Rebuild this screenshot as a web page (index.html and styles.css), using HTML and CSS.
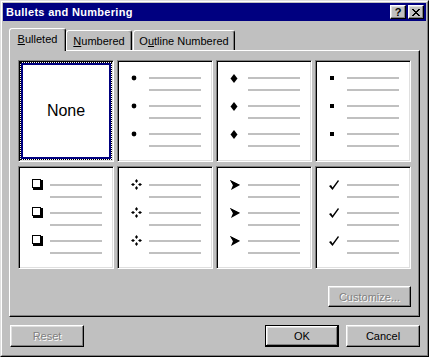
FILE: index.html
```html
<!DOCTYPE html>
<html>
<head>
<meta charset="utf-8">
<link rel="stylesheet" href="styles.css">
</head>
<body>
<div class="window">
  <div class="frame">
    <div class="titlebar">
      <span class="title">Bullets and Numbering</span>
      <div class="tbtns">
        <span class="tbtn help">?</span>
        <span class="tbtn close"><svg width="8" height="7" viewBox="0 0 8 7"><path d="M0 0h2v1h-2zM6 0h2v1h-2zM1 1h2v1h-2zM5 1h2v1h-2zM2 2h4v1h-4zM3 3h2v1h-2zM2 4h4v1h-4zM1 5h2v1h-2zM5 5h2v1h-2zM0 6h2v1h-2zM6 6h2v1h-2z" fill="#000"/></svg></span>
      </div>
    </div>
    <div class="tabs">
      <div class="tab active"><span><u>B</u>ulleted</span></div>
      <div class="tab numbered"><span><u>N</u>umbered</span></div>
      <div class="tab outline"><span>O<u>u</u>tline Numbered</span></div>
    </div>
    <div class="panel">
      <div class="grid">
        <div class="cell selected"><div class="focus"><span class="none">None</span></div></div>

        <div class="cell"><div class="sample">
          <div class="item"><span class="bul"><svg width="6" height="6" viewBox="0 0 6 6"><circle cx="3" cy="3" r="2.4" fill="#000"/></svg></span><span class="lines"><i></i><i></i></span></div>
          <div class="item"><span class="bul"><svg width="6" height="6" viewBox="0 0 6 6"><circle cx="3" cy="3" r="2.4" fill="#000"/></svg></span><span class="lines"><i></i><i></i></span></div>
          <div class="item"><span class="bul"><svg width="6" height="6" viewBox="0 0 6 6"><circle cx="3" cy="3" r="2.4" fill="#000"/></svg></span><span class="lines"><i></i><i></i></span></div>
        </div></div>

        <div class="cell"><div class="sample">
          <div class="item"><span class="bul"><svg width="8" height="9" viewBox="0 0 8 9"><path d="M4 0L7.5 4.5L4 9L0.5 4.5Z" fill="#000"/></svg></span><span class="lines"><i></i><i></i></span></div>
          <div class="item"><span class="bul"><svg width="8" height="9" viewBox="0 0 8 9"><path d="M4 0L7.5 4.5L4 9L0.5 4.5Z" fill="#000"/></svg></span><span class="lines"><i></i><i></i></span></div>
          <div class="item"><span class="bul"><svg width="8" height="9" viewBox="0 0 8 9"><path d="M4 0L7.5 4.5L4 9L0.5 4.5Z" fill="#000"/></svg></span><span class="lines"><i></i><i></i></span></div>
        </div></div>

        <div class="cell"><div class="sample">
          <div class="item"><span class="bul sq"><svg width="4" height="4" viewBox="0 0 4 4"><rect width="4" height="4" fill="#000"/></svg></span><span class="lines"><i></i><i></i></span></div>
          <div class="item"><span class="bul sq"><svg width="4" height="4" viewBox="0 0 4 4"><rect width="4" height="4" fill="#000"/></svg></span><span class="lines"><i></i><i></i></span></div>
          <div class="item"><span class="bul sq"><svg width="4" height="4" viewBox="0 0 4 4"><rect width="4" height="4" fill="#000"/></svg></span><span class="lines"><i></i><i></i></span></div>
        </div></div>

        <div class="cell"><div class="sample">
          <div class="item"><span class="bul"><svg width="11" height="11" viewBox="0 0 11 11"><path d="M0 0h9v9h-9zM1 1v7h7v-7z" fill="#000" fill-rule="evenodd"/><path d="M9 1h2v10h-10v-2h8z" fill="#000"/></svg></span><span class="lines"><i></i><i></i></span></div>
          <div class="item"><span class="bul"><svg width="11" height="11" viewBox="0 0 11 11"><path d="M0 0h9v9h-9zM1 1v7h7v-7z" fill="#000" fill-rule="evenodd"/><path d="M9 1h2v10h-10v-2h8z" fill="#000"/></svg></span><span class="lines"><i></i><i></i></span></div>
          <div class="item"><span class="bul"><svg width="11" height="11" viewBox="0 0 11 11"><path d="M0 0h9v9h-9zM1 1v7h7v-7z" fill="#000" fill-rule="evenodd"/><path d="M9 1h2v10h-10v-2h8z" fill="#000"/></svg></span><span class="lines"><i></i><i></i></span></div>
        </div></div>

        <div class="cell"><div class="sample">
          <div class="item"><span class="bul"><svg width="11" height="11" viewBox="0 0 11 11"><path d="M5.5 0L7 2L5.5 4L4 2ZM5.5 7L7 9L5.5 11L4 9ZM0 5.5L2 4L4 5.5L2 7ZM7 5.5L9 4L11 5.5L9 7Z" fill="#000"/></svg></span><span class="lines"><i></i><i></i></span></div>
          <div class="item"><span class="bul"><svg width="11" height="11" viewBox="0 0 11 11"><path d="M5.5 0L7 2L5.5 4L4 2ZM5.5 7L7 9L5.5 11L4 9ZM0 5.5L2 4L4 5.5L2 7ZM7 5.5L9 4L11 5.5L9 7Z" fill="#000"/></svg></span><span class="lines"><i></i><i></i></span></div>
          <div class="item"><span class="bul"><svg width="11" height="11" viewBox="0 0 11 11"><path d="M5.5 0L7 2L5.5 4L4 2ZM5.5 7L7 9L5.5 11L4 9ZM0 5.5L2 4L4 5.5L2 7ZM7 5.5L9 4L11 5.5L9 7Z" fill="#000"/></svg></span><span class="lines"><i></i><i></i></span></div>
        </div></div>

        <div class="cell"><div class="sample">
          <div class="item"><span class="bul"><svg width="10" height="10" viewBox="0 0 10 10"><path d="M0 0L10 5L1 10L3 5Z" fill="#000"/><path d="M0 0L10 5L3 5Z" fill="#000"/></svg></span><span class="lines"><i></i><i></i></span></div>
          <div class="item"><span class="bul"><svg width="10" height="10" viewBox="0 0 10 10"><path d="M0 0L10 5L1 10L3 5Z" fill="#000"/><path d="M0 0L10 5L3 5Z" fill="#000"/></svg></span><span class="lines"><i></i><i></i></span></div>
          <div class="item"><span class="bul"><svg width="10" height="10" viewBox="0 0 10 10"><path d="M0 0L10 5L1 10L3 5Z" fill="#000"/><path d="M0 0L10 5L3 5Z" fill="#000"/></svg></span><span class="lines"><i></i><i></i></span></div>
        </div></div>

        <div class="cell"><div class="sample">
          <div class="item"><span class="bul"><svg width="10" height="10" viewBox="0 0 10 10"><path d="M0 6L2 5L3.5 7.5L9 0L10 1L3.5 10Z" fill="#000"/></svg></span><span class="lines"><i></i><i></i></span></div>
          <div class="item"><span class="bul"><svg width="10" height="10" viewBox="0 0 10 10"><path d="M0 6L2 5L3.5 7.5L9 0L10 1L3.5 10Z" fill="#000"/></svg></span><span class="lines"><i></i><i></i></span></div>
          <div class="item"><span class="bul"><svg width="10" height="10" viewBox="0 0 10 10"><path d="M0 6L2 5L3.5 7.5L9 0L10 1L3.5 10Z" fill="#000"/></svg></span><span class="lines"><i></i><i></i></span></div>
        </div></div>
      </div>
      <div class="panel-foot">
        <button class="btn customize" disabled>Customize...</button>
      </div>
    </div>
    <div class="actions">
      <button class="btn" disabled>Reset</button>
      <span class="spacer"></span>
      <button class="btn default">OK</button>
      <button class="btn">Cancel</button>
    </div>
  </div>
</div>
</body>
</html>
```

FILE: styles.css
```css
* { box-sizing: border-box; }
html, body { margin: 0; padding: 0; background: #c0c0c0; }
body {
  font-family: "Liberation Sans", Arial, sans-serif;
  font-size: 11px;
  color: #000;
}
.window {
  width: 429px;
  height: 357px;
  border: 1px solid;
  border-color: #dfdfdf #000 #000 #dfdfdf;
  background: #c0c0c0;
}
.frame {
  height: 100%;
  border: 1px solid;
  border-color: #fff #808080 #808080 #fff;
  padding: 1px;
  display: flex;
  flex-direction: column;
}
.titlebar {
  height: 18px;
  background: #000080;
  color: #fff;
  display: flex;
  align-items: center;
  padding: 0 2px 0 3px;
}
.title {
  font-weight: bold;
  font-size: 11px;
  letter-spacing: 0.3px;
  flex: 1;
}
.tbtns { display: flex; gap: 2px; }
.tbtn {
  width: 16px;
  height: 14px;
  background: #c0c0c0;
  border: 1px solid;
  border-color: #fff #000 #000 #fff;
  box-shadow: inset -1px -1px #808080, inset 1px 1px #dfdfdf;
  color: #000;
  display: flex;
  align-items: center;
  justify-content: center;
  font-weight: bold;
  font-size: 11px;
  line-height: 1;
}
.tabs {
  display: flex;
  align-items: flex-end;
  height: 22px;
  margin-top: 7px;
  padding-left: 6px;
}
.tab {
  height: 20px;
  border: 1px solid;
  border-bottom: none;
  border-color: #fff #000 transparent #fff;
  box-shadow: inset -1px 0 #808080;
  border-radius: 3px 3px 0 0;
  background: #c0c0c0;
  display: flex;
  align-items: center;
  justify-content: center;
  white-space: nowrap;
}
.tab.active {
  width: 57px;
  height: 23px;
  margin-bottom: -1px;
  position: relative;
  z-index: 1;
  padding-bottom: 2px;
}
.tab.numbered { width: 66px; padding-top: 1px; }
.tab.outline { width: 102px; margin-left: 1px; padding-top: 1px; }
.panel {
  margin: 0 6px;
  height: 267px;
  border: 1px solid;
  border-color: #fff #000 #000 #fff;
  box-shadow: inset -1px -1px #808080;
  padding: 9px 8px 0 8px;
  display: flex;
  flex-direction: column;
}
.grid {
  display: grid;
  grid-template-columns: repeat(4, 96px);
  grid-template-rows: 102px 103px;
  column-gap: 3px;
  row-gap: 4px;
}
.cell {
  background: #fff;
  border: 1px solid;
  border-color: #808080 #fff #fff #808080;
  box-shadow: inset 1px 1px #000, inset -1px -1px #dfdfdf;
  padding: 1px;
  display: flex;
  align-items: center;
}
.focus {
  width: 100%;
  height: 100%;
  border: 1px dotted #000;
  box-shadow: inset 0 0 0 2px #000080;
  display: flex;
  align-items: center;
  justify-content: center;
}
.none {
  font-size: 16px;
  color: #000;
  margin-top: -1px;
}
.sample {
  display: flex;
  flex-direction: column;
  gap: 14px;
  padding-left: 11px;
  margin-top: 2px;
}
.item {
  display: flex;
  align-items: flex-start;
}
.bul {
  width: 19px;
  height: 14px;
  margin-top: -6px;
  display: flex;
  align-items: center;
  justify-content: flex-start;
  padding-left: 1px;
}
.bul.sq { padding-left: 2px; }
.lines {
  display: flex;
  flex-direction: column;
  gap: 10px;
}
.lines i {
  display: block;
  width: 52px;
  height: 2px;
  background: #c0c0c0;
}
.panel-foot {
  display: flex;
  justify-content: flex-end;
  margin-top: 17px;
}
.btn {
  font-family: "Liberation Sans", Arial, sans-serif;
  font-size: 11px;
  width: 74px;
  height: 22px;
  padding: 0;
  background: #c0c0c0;
  color: #000;
  border: 1px solid;
  border-color: #fff #000 #000 #fff;
  box-shadow: inset -1px -1px #808080, inset 1px 1px #dfdfdf;
}
.btn:disabled {
  color: #808080;
  text-shadow: 1px 1px #fff;
}
.customize { width: 83px; height: 21px; }
.actions {
  display: flex;
  margin-top: 8px;
  padding: 0 6px 0 7px;
  gap: 7px;
}
.spacer { flex: 1; }
.btn.default {
  border: 1px solid #000;
  box-shadow: inset -1px -1px #000, inset 1px 1px #fff, inset -2px -2px #808080, inset 2px 2px #dfdfdf;
}
u { text-decoration: underline; }
```
